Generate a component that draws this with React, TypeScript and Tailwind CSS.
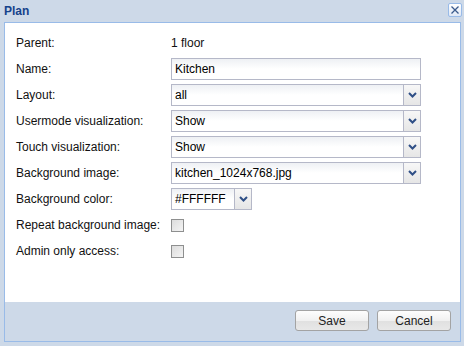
import React from "react";

const font = { fontFamily: '"Liberation Sans", Arial, sans-serif' };

function Chevron() {
  return (
    <svg width="9" height="6" viewBox="0 0 9 6">
      <path d="M1 1 L4.5 4.5 L8 1" fill="none" stroke="#2f4f86" strokeWidth="2" />
    </svg>
  );
}

function TextField({ value, width = "w-[250px]" }: { value: string; width?: string }) {
  return (
    <div className={`${width} h-[22px] border border-[#b5b8c8] bg-gradient-to-b from-[#eef0f4] via-white to-white flex items-center pl-[3px] text-[12px] text-black`}>
      {value}
    </div>
  );
}

function Combo({ value, width = "w-[250px]" }: { value: string; width?: string }) {
  return (
    <div className={`${width} h-[22px] border border-[#b5b8c8] flex`}>
      <div className="flex-1 bg-gradient-to-b from-[#eef0f4] via-white to-white flex items-center pl-[3px] text-[12px] text-black">
        {value}
      </div>
      <div className="w-[17px] border-l border-[#b5b8c8] bg-gradient-to-b from-[#f7f7f7] to-[#e6e6e6] flex items-center justify-center">
        <Chevron />
      </div>
    </div>
  );
}

function Check() {
  return (
    <div className="w-[13px] h-[13px] border border-[#8e8f8f] bg-gradient-to-br from-[#dcdcdc] to-[#f4f4f4]" />
  );
}

function Row({ label, children }: { label: string; children: React.ReactNode }) {
  return (
    <div className="flex items-center h-[22px]">
      <div className="w-[155px] text-[12px] text-[#111]">{label}</div>
      {children}
    </div>
  );
}

export default function App() {
  return (
    <div className="w-[464px] h-[346px] bg-[#cdd9e8] overflow-hidden" style={font}>
      <div className="h-[22px] flex items-center justify-between pl-[4px] pr-[2px]">
        <span className="text-[12px] font-bold text-[#15428b]">Plan</span>
        <div className="w-[14px] h-[14px] mt-[-2px] rounded-[2px] border border-[#99bbe8] bg-gradient-to-b from-white to-[#dfe8f6] flex items-center justify-center">
          <svg width="8" height="8" viewBox="0 0 8 8">
            <path d="M0.5 0.5 L7.5 7.5 M7.5 0.5 L0.5 7.5" stroke="#3a5a8c" strokeWidth="1.3" />
          </svg>
        </div>
      </div>
      <div className="ml-[4px] w-[457px] h-[320px] border border-[#99bbe8] flex flex-col">
        <div className="h-[279px] bg-white pt-[9px] pl-[11px] flex flex-col gap-[4px]">
          <Row label="Parent:">
            <span className="text-[12px] text-[#111]">1 floor</span>
          </Row>
          <Row label="Name:">
            <TextField value="Kitchen" />
          </Row>
          <Row label="Layout:">
            <Combo value="all" />
          </Row>
          <Row label="Usermode visualization:">
            <Combo value="Show" />
          </Row>
          <Row label="Touch visualization:">
            <Combo value="Show" />
          </Row>
          <Row label="Background image:">
            <Combo value="kitchen_1024x768.jpg" />
          </Row>
          <Row label="Background color:">
            <Combo value="#FFFFFF" width="w-[81px]" />
          </Row>
          <Row label="Repeat background image:">
            <Check />
          </Row>
          <Row label="Admin only access:">
            <Check />
          </Row>
        </div>
        <div className="flex-1 flex justify-end items-start pt-[8px] pr-[9px] gap-[8px]">
          {["Save", "Cancel"].map((b) => (
            <button
              key={b}
              className="w-[74px] h-[21px] rounded-[3px] border border-[#a3a3a3] bg-[linear-gradient(#fdfdfd_0%,#f1f1f1_50%,#e0e0e0_50%,#e8e8e8_100%)] text-[12px] text-[#222]"
            >
              {b}
            </button>
          ))}
        </div>
      </div>
    </div>
  );
}
